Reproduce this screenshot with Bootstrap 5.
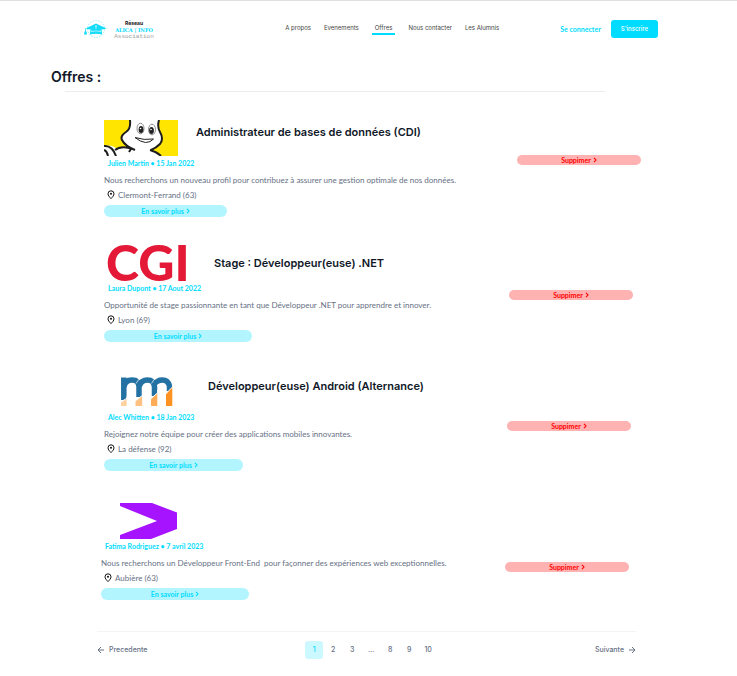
<!DOCTYPE html>
<html lang="fr">
<head>
<meta charset="utf-8">
<meta name="viewport" content="width=device-width, initial-scale=1">
<title>Offres - Alica Info</title>
<link href="https://cdn.jsdelivr.net/npm/bootstrap@5.3.0/dist/css/bootstrap.min.css" rel="stylesheet">
<style>
  body { font-family: Inter, "Open Sans", sans-serif; font-size: 7px; line-height: 10px; color: #667085; background: #fff; }
  a { text-decoration: none; }
  svg { display: block; flex: none; }
  .site-head { border-top: 1px solid #e0e0e0; padding: 19px 79px 0 83px; }
  .brand-words { width: 46px; text-align: center; }
  .brand-top { font-size: 5px; line-height: 6px; font-weight: 700; color: #111; }
  .brand-name { font-family: "DejaVu Serif", serif; font-size: 5px; line-height: 8px; font-weight: 700; color: #00dcff; white-space: nowrap; }
  .brand-sub { font-family: "Liberation Mono", monospace; font-size: 6px; line-height: 5px; color: #a0a0a0; }
  .site-nav { font-size: 6px; line-height: 9px; gap: 13px; margin: 0 61px 0 auto; }
  .site-nav a { color: #444; white-space: nowrap; padding: 3px 0 1px; border-bottom: 2px solid transparent; }
  .site-nav a.active { border-color: #00dcff; padding-left: 3px; padding-right: 3px; }
  .head-actions { gap: 10px; }
  .login { font-family: Lato, sans-serif; color: #00dcff; font-size: 7px; font-weight: 700; }
  .signup { background: #00dcff; color: #fff; font-size: 6px; line-height: 10px; font-weight: 500; border: 0; border-radius: 3px; padding: 4px 10px; }
  .page-title { font-size: 14px; line-height: 20px; font-weight: 600; color: #101828; margin: 28px 0 0 51px; }
  .rule-line { border: 0; border-top: 1px solid #eaecf0; opacity: 1; margin: 4px 132px 0 65px; }
  .offers { display: grid; gap: 32px; padding: 28px 96px 0 104px; font-family: Lato, sans-serif; }
  .offer-first { margin-bottom: -4px; }
  .offer-last { margin-left: -3px; }
  .offer-top { height: 36px; }
  .offer h2 { font-family: Inter, sans-serif; font-size: 11px; line-height: 24px; font-weight: 600; color: #101828; margin: 0; }
  .author { font-size: 7px; line-height: 14px; font-weight: 700; color: #00dcff; margin: 0 0 0 4px; }
  .desc { font-size: 8px; line-height: 20px; margin: 0; white-space: pre-wrap; }
  .place { font-size: 8px; margin: 0 0 5px 3px; gap: 3px; }
  .pill { border: 0; border-radius: 6px; font-size: 7px; line-height: 8px; font-weight: 700; gap: 2px; padding: 0; }
  .more { height: 12px; background: #b2f5ff; color: #00dcff; }
  .w-short { width: 123px; } .w-mid { width: 139px; } .w-long { width: 148px; }
  .remove { width: 124px; height: 10px; background: #ffb2b2; color: #ff0000; flex: none; }
  .drop-a { margin-top: 35px; } .drop-b { margin: 45px 8px 0 0; } .drop-c { margin: 47px 10px 0 0; } .drop-d { margin: 59px 12px 0 0; }
  .logo-cgi { overflow: visible; font-family: Lato, sans-serif; font-weight: 900; font-size: 50px; fill: #e31937; }
  .pager-area { border-top: 1px solid #f2f4f7; margin: 31px 101px 0 97px; padding-top: 9px; font-weight: 500; }
  .pager-area a { color: #667085; }
  .pager-list { gap: 1px; }
  .pager-num { width: 18px; height: 18px; border-radius: 3px; }
  .pager-area .current { background: #ccf8ff; color: #00dcff; }
</style>
<script src="https://cdn.jsdelivr.net/npm/bootstrap@5.3.0/dist/js/bootstrap.bundle.min.js"></script>
</head>
<body>
<svg width="0" height="0" class="position-absolute" aria-hidden="true">
  <symbol id="chev" viewBox="0 0 4 6"><path d="M1 .8 3 3 1 5.200" fill="none" stroke="currentColor" stroke-width="1.1"/></symbol>
  <symbol id="pin" viewBox="0 0 8 10"><path d="M4 8.600C2.500 7 1 5.500 1 3.800a3 3 0 0 1 6 0C7 5.500 5.500 7 4 8.600Z" fill="none" stroke="#111" stroke-width="1"/><circle cx="4" cy="3.800" r="1" fill="#111"/></symbol>
  <symbol id="arrow" viewBox="0 0 8 8"><path d="M1 4h6M4 1l3 3-3 3" fill="none" stroke="#667085" stroke-width="1"/></symbol>
</svg>

<header class="site-head d-flex justify-content-between align-items-start">
  <a href="#" class="d-flex gap-1 align-items-start" aria-label="Alica Info">
    <svg width="24" height="18" viewBox="0 0 24 18">
      <circle cx="13" cy="9" r="8.500" fill="none" stroke="#8fe9fa" stroke-width="1" stroke-dasharray="1.500 1.300"/>
      <path d="M2.500 8.500 13 3.500l10.500 5L13 11Z" fill="#13dcf8"/>
      <path d="M7 10.500q6-1.500 12 0v4q-6-1.600-12 0Z" fill="#13dcf8"/>
      <path d="M7.500 11.700q5.500-1.600 11 0" stroke="#fff" stroke-width=".6" fill="none"/>
      <path d="M13 5v4M12 6.500h2" stroke="#aaf4ff" stroke-width=".8"/>
      <path d="M2.500 8.500v4" stroke="#13dcf8" stroke-width=".8"/><path d="M1.500 11.500h2l.5 3H1Z" fill="#13dcf8"/>
    </svg>
    <span class="brand-words">
      <span class="brand-top d-block">Réseau</span>
      <span class="brand-name d-block">ALICA | INFO</span>
      <span class="brand-sub d-block">Association</span>
    </span>
  </a>
  <nav class="site-nav d-flex align-items-start">
    <a href="#">A propos</a><a href="#">Evenements</a><a href="#" class="active">Offres</a><a href="#">Nous contacter</a><a href="#">Les Alumnis</a>
  </nav>
  <div class="head-actions d-flex align-items-center">
    <a href="#" class="login">Se connecter</a>
    <button type="button" class="signup">S'inscrire</button>
  </div>
</header>

<main>
  <h1 class="page-title">Offres :</h1>
  <hr class="rule-line">
  <div class="offers">
    <article class="offer offer-first d-flex justify-content-between">
      <div>
        <div class="offer-top d-flex">
          <svg width="92" height="36" viewBox="0 0 92 36">
            <rect width="74" height="36" fill="#ffe500"/>
            <path d="M0 26Q8 24 13 29Q20 26 29 29Q22 25 18 20Q16 16 22 12Q26 9 26 0H54Q54 9 57 13Q60 19 55 24Q51 28 47 30Q54 32 58 36H0Z" fill="#fff"/>
            <path d="M26 0Q27 9 22 12Q16 16 18 20Q21 26 31 30M55 0Q53 7 56 12Q60 19 56 24Q52 28 47 30M29 29Q17 25 11 30M27 29l-2 3M0 26Q8 25 12 36M0 30Q3 31 4 36M46 30q7 2 11 6" fill="none" stroke="#1d1d1d" stroke-width="2"/>
            <ellipse cx="36.500" cy="8.500" rx="3.500" ry="5.300" fill="#fff" stroke="#444" stroke-width=".6"/><ellipse cx="48" cy="9.500" rx="3.500" ry="5.300" fill="#fff" stroke="#444" stroke-width=".6"/>
            <ellipse cx="37" cy="9.500" rx="2.400" ry="3.600" fill="#222"/><ellipse cx="47.500" cy="10.500" rx="2.400" ry="3.600" fill="#222"/>
            <circle cx="36.500" cy="8.500" r=".8" fill="#fff"/><circle cx="47" cy="9.500" r=".8" fill="#fff"/>
            <path d="M31 17.500q9 3 18.500 1.500-3 3.500-8 3.500-5-.5-10.500-5Z" fill="#fff" stroke="#222" stroke-width="1"/>
          </svg>
          <h2>Administrateur de bases de données (CDI)</h2>
        </div>
        <p class="author">Julien Martin • 15 Jan 2022</p>
        <p class="desc">Nous recherchons un nouveau profil pour contribuez à assurer une gestion optimale de nos données.</p>
        <p class="place d-flex"><svg width="8" height="10"><use href="#pin"/></svg>Clermont-Ferrand (63)</p>
        <button type="button" class="pill more w-short d-flex align-items-center justify-content-center">En savoir plus<svg width="4" height="6"><use href="#chev"/></svg></button>
      </div>
      <button type="button" class="pill remove drop-a d-flex align-items-center justify-content-center">Suppimer<svg width="4" height="6"><use href="#chev"/></svg></button>
    </article>

    <article class="offer d-flex justify-content-between">
      <div>
        <div class="offer-top d-flex align-items-center">
          <svg class="logo-cgi" width="110" height="36" viewBox="0 0 110 36"><text x="2" y="36">CGI</text></svg>
          <h2>Stage : Développeur(euse) .NET</h2>
        </div>
        <p class="author">Laura Dupont • 17 Aout 2022</p>
        <p class="desc">Opportunité de stage passionnante en tant que Développeur .NET pour apprendre et innover.</p>
        <p class="place d-flex"><svg width="8" height="10"><use href="#pin"/></svg>Lyon (69)</p>
        <button type="button" class="pill more w-long d-flex align-items-center justify-content-center">En savoir plus<svg width="4" height="6"><use href="#chev"/></svg></button>
      </div>
      <button type="button" class="pill remove drop-b d-flex align-items-center justify-content-center">Suppimer<svg width="4" height="6"><use href="#chev"/></svg></button>
    </article>

    <article class="offer d-flex justify-content-between">
      <div>
        <div class="offer-top d-flex">
          <svg width="104" height="36" viewBox="0 0 104 36">
            <g fill="none" stroke="#2472a4" stroke-width="5.500">
              <path d="M19.800 3.500V26M20 13Q21 6 28 6T35 13V23M35.500 12Q37 6 43.500 6T50.500 13V22M50.500 10Q53 6 58.500 6T65.500 12V17"/>
            </g>
            <path d="M32 9.500Q34 4.500 39 3.500M47.500 9.500Q49 5 54 3.500" stroke="#fff" stroke-width=".7" fill="none"/>
            <path d="M16 29l7-4.500V32h-7Z" fill="#ffd1a1"/><path d="M31.500 27l7-5.500V32h-7Z" fill="#ffc181"/><path d="M47 25l7-6.500V32h-7Z" fill="#ffac58"/>
            <path d="M62 20l7-8V32h-7Z" fill="#ff9220"/>
            <path d="M16 28.500 24 23.500M31 27l8-6M46.500 25l8-7M61.500 20l8-8" stroke="#fff" stroke-width="1"/>
            <path d="M22.600 22h2v11h-2ZM38.300 20h2v13h-2ZM53.300 16h2v17h-2ZM68.300 10h2v23h-2ZM15 24h2v9h-2Z" fill="#fff"/>
          </svg>
          <h2>Développeur(euse) Android (Alternance)</h2>
        </div>
        <p class="author">Alec Whitten • 18 Jan 2023</p>
        <p class="desc">Rejoignez notre équipe pour créer des applications mobiles innovantes.</p>
        <p class="place d-flex"><svg width="8" height="10"><use href="#pin"/></svg>La défense (92)</p>
        <button type="button" class="pill more w-mid d-flex align-items-center justify-content-center">En savoir plus<svg width="4" height="6"><use href="#chev"/></svg></button>
      </div>
      <button type="button" class="pill remove drop-c d-flex align-items-center justify-content-center">Suppimer<svg width="4" height="6"><use href="#chev"/></svg></button>
    </article>

    <article class="offer offer-last d-flex justify-content-between">
      <div>
        <div class="offer-top d-flex">
          <svg width="76" height="36" viewBox="0 0 76 36"><path d="M19 0H51L76 9.500V26L50 36H19V32L56 18 19 3Z" fill="#a614ff"/></svg>
        </div>
        <p class="author">Fatima Rodriguez • 7 avril 2023</p>
        <p class="desc">Nous recherchons un Développeur Front-End  pour façonner des expériences web exceptionnelles.</p>
        <p class="place d-flex"><svg width="8" height="10"><use href="#pin"/></svg>Aubière (63)</p>
        <button type="button" class="pill more w-long d-flex align-items-center justify-content-center">En savoir plus<svg width="4" height="6"><use href="#chev"/></svg></button>
      </div>
      <button type="button" class="pill remove drop-d d-flex align-items-center justify-content-center">Suppimer<svg width="4" height="6"><use href="#chev"/></svg></button>
    </article>
  </div>

  <nav class="pager-area d-flex align-items-center justify-content-between" aria-label="Pagination">
    <a href="#" class="d-flex align-items-center gap-1"><svg width="8" height="8" viewBox="0 0 8 8"><path d="M7 4H1M4 1 1 4l3 3" fill="none" stroke="#667085"/></svg>Precedente</a>
    <div class="pager-list d-flex text-center">
      <a href="#" class="pager-num current d-flex align-items-center justify-content-center" aria-current="page">1</a>
      <a href="#" class="pager-num d-flex align-items-center justify-content-center">2</a>
      <a href="#" class="pager-num d-flex align-items-center justify-content-center">3</a>
      <span class="pager-num d-flex align-items-center justify-content-center">...</span>
      <a href="#" class="pager-num d-flex align-items-center justify-content-center">8</a>
      <a href="#" class="pager-num d-flex align-items-center justify-content-center">9</a>
      <a href="#" class="pager-num d-flex align-items-center justify-content-center">10</a>
    </div>
    <a href="#" class="d-flex align-items-center gap-1">Suivante<svg width="8" height="8"><use href="#arrow"/></svg></a>
  </nav>
</main>
</body>
</html>
